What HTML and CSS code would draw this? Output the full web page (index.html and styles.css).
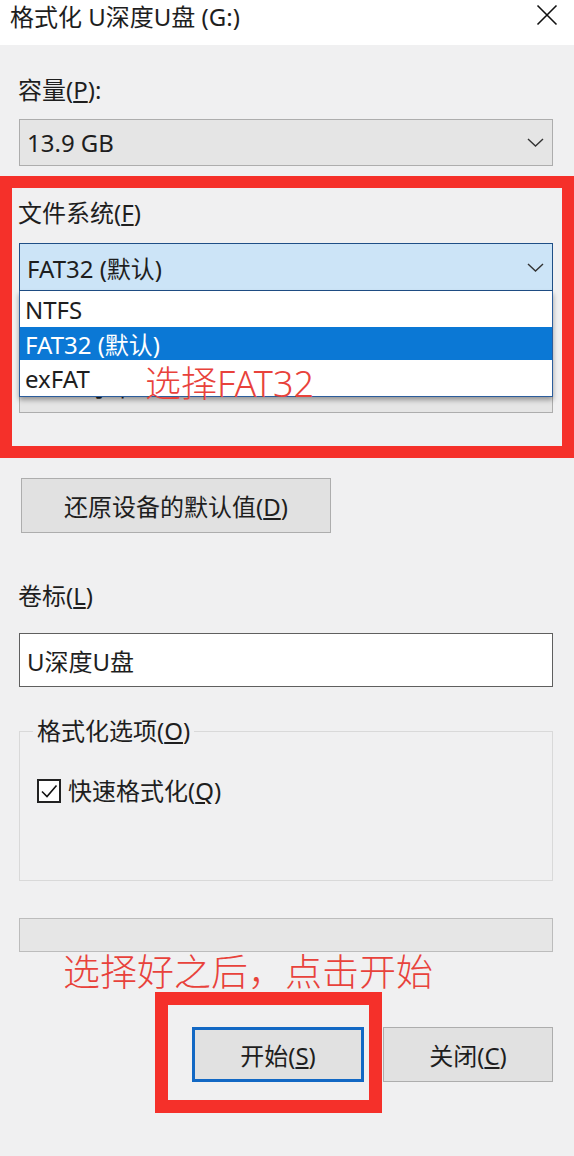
FILE: index.html
```html
<!DOCTYPE html>
<html lang="zh-CN">
<head>
    <meta charset="UTF-8">
    <meta name="viewport" content="width=device-width, initial-scale=1.0">
    <title>格式化 U深度U盘 (G:)</title>
    <link rel="stylesheet" href="styles.css">
</head>
<body>
    <div class="dialog">
        <div class="titlebar">
            <span class="title">格式化 U深度U盘 (G:)</span>
            <svg class="close" width="22" height="22" viewBox="0 0 22 22">
                <path d="M1.5 1.5L20.5 20.5M20.5 1.5L1.5 20.5" stroke="#111" stroke-width="1.6" fill="none"/>
            </svg>
        </div>

        <div class="main">
            <div class="label label-capacity">容量(<u>P</u>):</div>
            <div class="select">
                <span>13.9 GB</span>
                <svg class="chevron" width="17" height="9" viewBox="0 0 17 9"><path d="M1 1L8.5 8L16 1" stroke="#333" stroke-width="1.4" fill="none"/></svg>
            </div>

            <div class="label label-fs">文件系统(<u>F</u>)</div>
            <div class="select-wrap">
                <div class="select select-focus">
                    <span>FAT32 (默认)</span>
                    <svg class="chevron" width="17" height="9" viewBox="0 0 17 9"><path d="M1 1L8.5 8L16 1" stroke="#333" stroke-width="1.4" fill="none"/></svg>
                </div>
                <ul class="dropdown">
                    <li>NTFS</li>
                    <li class="active">FAT32 (默认)</li>
                    <li>exFAT</li>
                </ul>
            </div>

            <!-- caixa de cluster, quase toda escondida pela lista -->
            <div class="select select-unit">
                <span class="unit-text">字节</span>
                <svg class="chevron" width="17" height="9" viewBox="0 0 17 9"><path d="M1 1L8.5 8L16 1" stroke="#333" stroke-width="1.4" fill="none"/></svg>
            </div>

            <button class="btn btn-restore">还原设备的默认值(<u>D</u>)</button>

            <div class="label label-volume">卷标(<u>L</u>)</div>
            <div class="input">U深度U盘</div>

            <div class="group">
                <div class="group-title">格式化选项(<u>O</u>)</div>
                <div class="check-row">
                    <span class="checkbox">
                        <svg width="20" height="20" viewBox="0 0 20 20"><path d="M3 10.5L8 15.5L17.5 4.5" stroke="#111" stroke-width="1.6" fill="none"/></svg>
                    </span>
                    <span>快速格式化(<u>Q</u>)</span>
                </div>
            </div>

            <div class="progress"></div>

            <div class="actions">
                <button class="btn btn-start">开始(<u>S</u>)</button>
                <button class="btn btn-close">关闭(<u>C</u>)</button>
            </div>
        </div>

        <!-- 标注 -->
        <div class="mark mark-fs"></div>
        <div class="note note-fs">选择FAT32</div>
        <div class="note note-start">选择好之后，点击开始</div>
        <div class="mark mark-start"></div>
    </div>
</body>
</html>
```

FILE: styles.css
```css
* {
    margin: 0;
    padding: 0;
    box-sizing: border-box;
}

body {
    font-family: "Noto Sans", "Noto Sans CJK SC", sans-serif;
    font-size: 24px;
    color: #1e1e1e;
    background: #f0f0f1;
    width: 574px;
    height: 1156px;
    overflow: hidden;
}

.dialog {
    position: relative;
    height: 1156px;
}

.titlebar {
    height: 45px;
    background: #fff;
    display: flex;
    justify-content: space-between;
    align-items: flex-start;
    padding: 5px 16px 0 10px;
}

.title {
    line-height: 24px;
}

.close {
    margin-top: -1px;
}

.main {
    padding: 0 21px 0 19px;
}

.label {
    line-height: 24px;
}

.label-capacity {
    margin-top: 33px;
    margin-left: -1px;
}

.label-fs {
    margin-top: 35px;
    margin-left: -1px;
}

.label-volume {
    margin-top: 51px;
    margin-left: -1px;
}

.select {
    height: 47px;
    margin-top: 17px;
    border: 1px solid #adadad;
    background: #e5e5e5;
    display: flex;
    align-items: center;
    justify-content: space-between;
    padding: 0 8px 0 7px;
}

.select-wrap {
    position: relative;
    margin-top: 18px;
}

.select-wrap .select {
    margin-top: 0;
}

.select-focus {
    height: 48px;
    background: #cce4f7;
    border-color: #1f4f86;
}

.select-unit {
    height: 48px;
    margin-top: 74px;
    padding-bottom: 8px;
}

.unit-text {
    margin-left: 62px;
}

/* Lista aberta */
.dropdown {
    position: absolute;
    top: 48px;
    left: 0;
    right: 0;
    z-index: 2;
    list-style: none;
    background: #fff;
    border: 1px solid #2c5d9c;
    border-top: none;
    box-shadow: 0 3px 5px rgba(0, 0, 0, 0.35);
}

.dropdown li {
    height: 36px;
    display: flex;
    align-items: center;
    padding-left: 5px;
}

.dropdown li.active {
    height: 33px;
    background: #0b78d5;
    color: #fff;
}

.btn {
    font: inherit;
    color: #1e1e1e;
    background: #e1e1e1;
    border: 1px solid #adadad;
    height: 55px;
}

.btn-restore {
    display: block;
    width: 310px;
    margin: 65px 0 0 2px;
}

.input {
    height: 54px;
    margin-top: 25px;
    background: #fff;
    border: 1px solid #5f5f5f;
    display: flex;
    align-items: center;
    padding-left: 7px;
}

.group {
    margin-top: 44px;
    height: 150px;
    border: 1px solid #d9d9d9;
    padding: 0 17px;
}

.group-title {
    width: max-content;
    margin: -13px 0 0 -4px;
    padding: 0 4px;
    line-height: 24px;
    background: #f0f0f1;
}

.check-row {
    display: flex;
    align-items: center;
    gap: 7px;
    margin-top: 36px;
    line-height: 24px;
}

.checkbox {
    width: 24px;
    height: 24px;
    border: 2px solid #222;
    background: #fff;
    display: flex;
    align-items: center;
    justify-content: center;
}

.progress {
    margin-top: 37px;
    height: 34px;
    border: 1px solid #bcbcbc;
    background: #e6e6e6;
}

.actions {
    display: flex;
    justify-content: flex-end;
    gap: 19px;
    margin-top: 75px;
}

.btn-start {
    width: 172px;
    border: 3px solid #1268c4;
}

.btn-close {
    width: 170px;
}

/* Marcas vermelhas */
.mark {
    position: absolute;
    border: 12px solid #f5302a;
}

.mark-fs {
    left: 0;
    top: 176px;
    width: 574px;
    height: 282px;
}

.mark-start {
    left: 155px;
    top: 992px;
    width: 227px;
    height: 121px;
    border-width: 13px;
}

.note {
    position: absolute;
    z-index: 3;
    color: #e8423b;
    line-height: 1;
    white-space: nowrap;
    font-weight: 300;
}

.note-fs {
    left: 145px;
    top: 366px;
    font-size: 36px;
}

.note-start {
    left: 63px;
    top: 953px;
    font-size: 37px;
}
```
